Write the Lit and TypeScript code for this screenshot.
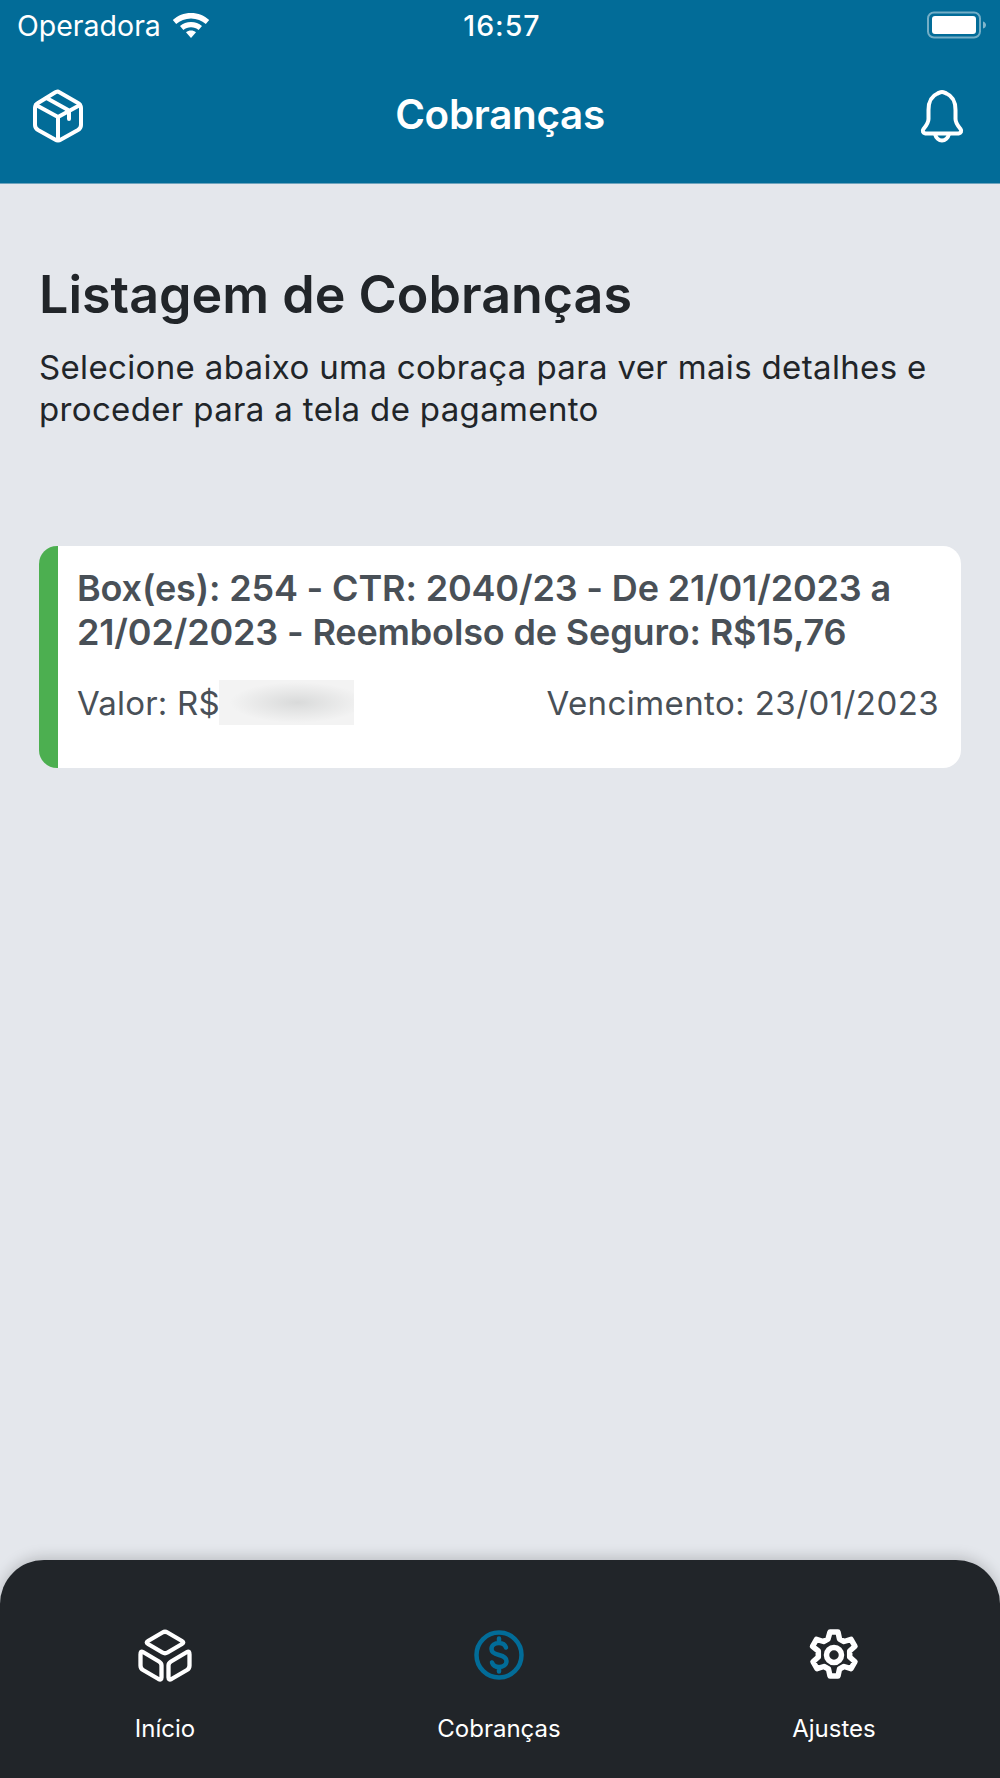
import { LitElement, html, css } from "lit";
import { customElement } from "lit/decorators.js";

@customElement("app-root")
export class AppRoot extends LitElement {
  static styles = css`
    :host { display: block; width: 1000px; height: 1778px; font-family: Inter, "Liberation Sans", sans-serif; background: #e4e7ec; }
    .page { height: 1778px; display: flex; flex-direction: column; background: #e4e7ec; }
    .head { height: 184px; flex: none; background: #026c98; color: #fff; display: flex; flex-direction: column; border-bottom: 1px solid #6ea4bd; box-sizing: border-box; }
    .status { height: 50px; display: grid; grid-template-columns: 1fr auto 1fr; align-items: center; padding: 0 13px 0 17px; font-size: 28.5px; }
    .carrier { display: flex; align-items: center; gap: 11px; }
    .time { font-weight: 500; letter-spacing: 1px; }
    .batt { justify-self: end; display: flex; }
    .nav { flex: 1; display: grid; grid-template-columns: 1fr auto 1fr; align-items: center; padding: 0 36px 1px; }
    .nav h1 { margin: 0 0 4px; font-size: 40.4px; font-weight: 600; letter-spacing: -0.3px; }
    .pkg { margin-left: -4px; }
    .bell { justify-self: end; }
    .main { flex: 1; padding: 80px 39px 0; }
    h2 { margin: 0; font-size: 52px; line-height: 62px; font-weight: 600; color: #212529; letter-spacing: 0; }
    .sub { margin: 20px 0 0; font-size: 33px; line-height: 42px; color: #212529; letter-spacing: 0.35px; }
    .card { margin-top: 116px; height: 222px; box-sizing: border-box; background: #fff; border-radius: 18px; border-left: 19px solid #4caf50; padding: 21px 22px 0 19px; color: #495057; }
    .t { font-size: 36px; line-height: 43.5px; font-weight: 600; letter-spacing: -0.16px; }
    .row { display: flex; justify-content: space-between; align-items: center; margin-top: 26px; font-size: 33px; letter-spacing: 0.42px; }
    .val { display: flex; align-items: center; letter-spacing: 0.2px; }
    .blur { width: 135px; height: 45px; margin-left: -1px; background: radial-gradient(ellipse 50% 45% at 58% 50%, #d9dada, #f3f3f3); }
    .tabs { height: 218px; flex: none; background: #212529; border-radius: 44px 44px 0 0; box-shadow: 0 -3px 14px rgba(0,0,0,.18); display: grid; grid-template-columns: 330px 338px 332px; color: #fff; font-size: 24px; box-sizing: border-box; }
    .tab { display: flex; flex-direction: column; align-items: center; padding-top: 67px; gap: 31px; }
    .tab svg { width: 56px; height: 56px; display: block; }
  `;

  render() {
    return html`<div class="page">
      <div class="head">
        <div class="status">
          <div class="carrier">Operadora
            <svg width="38" height="28" viewBox="0 0 38 28" fill="#fff"><path d="M19 2C11.800 2 5.800 4.600 0.800 9L4.200 13C8.200 9.600 13.300 7.500 19 7.500S29.800 9.600 33.800 13L37.200 9C32.200 4.600 26.200 2 19 2Z"/><path d="M19 11C14.800 11 11 12.500 8 15L11.400 19C13.500 17.300 16.100 16.300 19 16.300S24.500 17.300 26.600 19L30 15C27 12.500 23.200 11 19 11Z"/><path d="M19 19.500C17 19.500 15.500 20.100 14 21.200L19 27L24 21.200C22.500 20.100 21 19.500 19 19.500Z"/></svg>
          </div>
          <div class="time">16:57</div>
          <div class="batt">
            <svg width="60" height="28" viewBox="0 0 60 28"><rect x="1" y="1.500" width="52" height="25" rx="6" fill="none" stroke="#fff" stroke-opacity=".45" stroke-width="2"/><rect x="5" y="5" width="44" height="18" rx="3" fill="#fff"/><path d="M56 10.500c2 .5 3 2 3 3.500s-1 3-3 3.500z" fill="#fff" fill-opacity=".5"/></svg>
          </div>
        </div>
        <div class="nav">
          <svg class="pkg" width="52" height="54" viewBox="0 0 52 54" fill="none" stroke="#fff" stroke-width="4" stroke-linejoin="round" stroke-linecap="round"><path d="M26 2.500 46 14c2 1.200 3 2.800 3 5v17c0 2.200-1 3.800-3 5L29 50.500c-2 1.200-4 1.200-6 0L6 41c-2-1.200-3-2.800-3-5V19c0-2.200 1-3.800 3-5L23 3.500c1-.6 2-.8 3-1Z"/><path d="M4 16 26 28 48 16M26 28V51M14.500 9 37 21.500V30"/></svg>
          <h1>Cobranças</h1>
          <svg class="bell" width="44" height="54" viewBox="0 0 44 54" fill="none" stroke="#fff" stroke-width="4" stroke-linejoin="round" stroke-linecap="round"><path d="M22 3c2 0 3 1 4.500 1.500C32.500 7 35.500 13 35.500 21v9c0 4 2.500 7 5 10 1.500 2 .5 4-2 4.500H5.500c-2.500-.5-3.500-2.500-2-4.500 2.500-3 5-6 5-10v-9C8.500 13 11.500 7 17.500 4.500 19 4 20 3 22 3Z"/><path d="M15 45c1 4 4 6.500 7 6.500s6-2.500 7-6.500"/></svg>
        </div>
      </div>
      <div class="main">
        <h2>Listagem de Cobranças</h2>
        <p class="sub">Selecione abaixo uma cobraça para ver mais detalhes e proceder para a tela de pagamento</p>
        <div class="card">
          <div class="t">Box(es): 254 - CTR: 2040/23 - De 21/01/2023 a 21/02/2023 - Reembolso de Seguro: R$15,76</div>
          <div class="row">
            <div class="val">Valor: R$<div class="blur"></div></div>
            <div>Vencimento: 23/01/2023</div>
          </div>
        </div>
      </div>
      <div class="tabs">
        <div class="tab">
          <svg viewBox="0 0 56 56" fill="none" stroke="#fff" stroke-width="4.300" stroke-linejoin="round"><path d="M25.500 5.500Q28 4 30.500 5.500L45 14Q47.500 15.500 45 17L30.500 25.500Q28 27 25.500 25.500L11 17Q8.500 15.500 11 14Z"/><path d="M6 25 22 34.500Q24.500 36 24.500 38.500V50.500Q24.500 53.500 21.500 52L6 43Q3.500 41.500 3.500 38.500V27.500Q3.500 23.500 6 25Z"/><path d="M50 25 34 34.500Q31.500 36 31.500 38.500V50.500Q31.500 53.500 34.500 52L50 43Q52.500 41.500 52.500 38.500V27.500Q52.500 23.500 50 25Z"/></svg>
          <span>Início</span>
        </div>
        <div class="tab">
          <svg viewBox="0 0 56 56" fill="none" stroke="#026c98" stroke-width="4.500" stroke-linecap="round"><circle cx="28" cy="28" r="22.500"/><path d="M35 20.500c-1-3-4-4.500-7-4.500-4 0-7.500 2.300-7.500 6 0 3.800 3.500 5 7.500 6s7.500 2.200 7.500 6c0 3.700-3.500 6-7.500 6-3 0-6-1.500-7-4.500M28 11.500V16M28 40v4.500"/></svg>
          <span>Cobranças</span>
        </div>
        <div class="tab">
          <svg viewBox="0 0 56 56" fill="none" stroke="#fff" stroke-width="5.500" stroke-linejoin="round"><circle cx="28" cy="28" r="7.500"/><path d="M24 5h8l1.500 7 4.500 2.500 7-2.200 4 7-5.300 4.700v6l5.300 4.700-4 7-7-2.200-4.500 2.500-1.500 7h-8l-1.500-7-4.500-2.500-7 2.200-4-7 5.300-4.700v-6L6.500 19.300l4-7 7 2.200 4.500-2.500Z"/></svg>
          <span>Ajustes</span>
        </div>
      </div>
    </div>`;
  }
}
